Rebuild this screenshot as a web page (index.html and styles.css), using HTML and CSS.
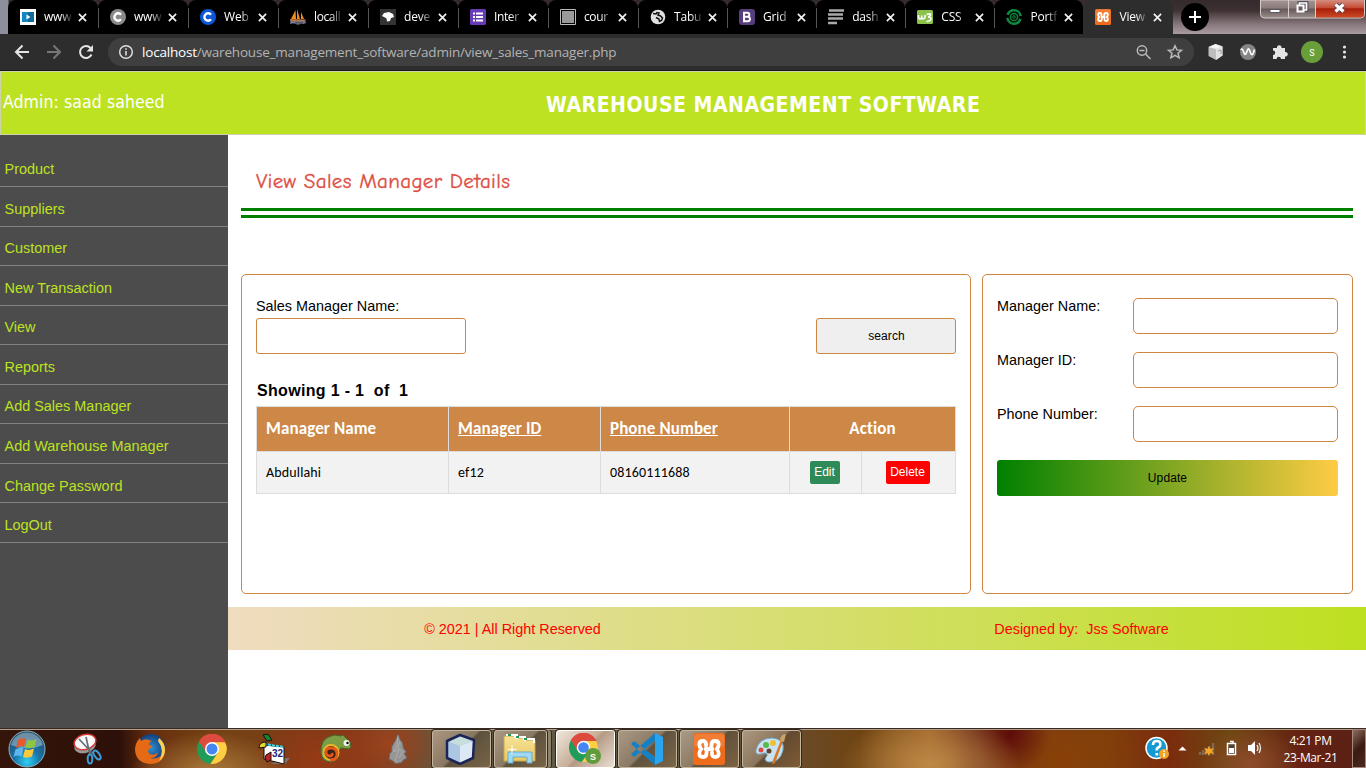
FILE: index.html
```html
<!DOCTYPE html>
<html lang="en">
<head>
<meta charset="utf-8">
<title>View Sales Manager</title>
<link rel="stylesheet" href="styles.css">
</head>
<body>
<svg width="0" height="0" class="defs">
  <defs>
    <radialGradient id="orb" cx=".5" cy=".85" r=".8"><stop offset="0" stop-color="#2fd0f5"/><stop offset=".45" stop-color="#1874a8"/><stop offset="1" stop-color="#274c66"/></radialGradient>
    <linearGradient id="fold" x2="0" y2="1"><stop offset="0" stop-color="#f6e29a"/><stop offset="1" stop-color="#ecc95f"/></linearGradient>
    <linearGradient id="cap" x2="0" y2="1"><stop offset="0" stop-color="#a39593"/><stop offset=".45" stop-color="#8b7b79"/><stop offset=".5" stop-color="#655857"/><stop offset="1" stop-color="#9b8f8e"/></linearGradient>
    <linearGradient id="capx" x2="0" y2="1"><stop offset="0" stop-color="#d58c7e"/><stop offset=".45" stop-color="#c44a33"/><stop offset=".5" stop-color="#a81e0b"/><stop offset="1" stop-color="#cc4a25"/></linearGradient>
    <radialGradient id="ffx"><stop offset="0" stop-color="#2c8fd6"/><stop offset="1" stop-color="#123f7c"/></radialGradient>
    <symbol id="x" viewBox="0 0 10 10"><path d="M1 1l8 8M9 1L1 9" stroke="#f2f2f2" stroke-width="1.9"/></symbol>
    <symbol id="chrome" viewBox="0 0 30 30">
      <path d="M15 15L2 7.5A15 15 0 0 1 28 7.5L15 8z" fill="#dd4b3e"/>
      <path d="M15 15L2 7.5A15 15 0 0 0 13.4 29.9L21 18.5z" fill="#1f9d58"/>
      <path d="M15 8h13A15 15 0 0 1 13.4 29.9L21 18.5z" fill="#ffce43"/>
      <path d="M2 7.5A15 15 0 0 1 28 7.5L28.3 8.2H15L8.8 18z" fill="#dd4b3e"/>
      <circle cx="15" cy="15" r="7" fill="#fff"/><circle cx="15" cy="15" r="5.5" fill="#4486f4"/>
    </symbol>
    <symbol id="xampp" viewBox="0 0 32 32">
      <rect width="32" height="32" rx="3" fill="#ee6c1c"/><rect x="1" y="1" width="30" height="13" rx="3" fill="#f59552" opacity=".45"/>
      <path d="M13 12.500V11a3 3 0 0 0-3-3Q6.300 8 6.300 11.500 6.300 14 8.300 16 6.300 18 6.300 20.500 6.300 24 10 24q3.500 0 3.500-4 0-4 2.500-4t2.500-4q0-4 3.500-4 3.700 0 3.700 3.500 0 2.500-2 4.500 2 2 2 4.500 0 3.500-3.700 3.500a3 3 0 0 1-3-3v-1.500M12.500 16h7" fill="none" stroke="#fff" stroke-width="3.800" stroke-linecap="round" stroke-linejoin="round"/>
    </symbol>
  </defs>
</svg>

<div class="screen">
  <div class="tabstrip">
    <div class="tab"><svg class="fav" viewBox="0 0 16 16"><path fill="#fff" d="M0 0h16v16H0z"/><path fill="#1488c4" d="M2 3h12v10H2z"/><path fill="#116b9c" d="M8 3h6v10H8z"/><path fill="#fff" d="M6.500 5.500l4 2.500-4 2.500z"/></svg><span>www</span><svg class="close"><use href="#x"/></svg></div>
    <div class="tab"><svg class="fav" viewBox="0 0 16 16"><circle cx="8" cy="8" r="8" fill="#8a8a8a"/><path d="M11 5.700a3.700 3.700 0 1 0 0 4.600" fill="none" stroke="#fff" stroke-width="2.400"/></svg><span>www</span><svg class="close"><use href="#x"/></svg></div>
    <div class="tab"><svg class="fav" viewBox="0 0 16 16"><circle cx="8" cy="8" r="8" fill="#0b57d8"/><path d="M11 5.700a3.700 3.700 0 1 0 0 4.600" fill="none" stroke="#fff" stroke-width="2.400"/></svg><span>Web</span><svg class="close"><use href="#x"/></svg></div>
    <div class="tab"><svg class="fav" viewBox="0 0 16 16"><path d="M1 10L5.500 1 6 10zM7 10V0l3 10zM11 10V3l3 7z" fill="#ee8b1b"/><path d="M0 10l16 .5-2 2H1z" fill="#c8732a"/><path d="M1 15v-3l2 2 2-2v3M7 12v3h2v-3h2v3M13 15v-3h2v2h-2" fill="none" stroke="#8b8ba8" stroke-width="1.200"/></svg><span class="tight">locall</span><svg class="close"><use href="#x"/></svg></div>
    <div class="tab"><svg class="fav" viewBox="0 0 16 16"><path fill="#333" d="M0 0h16v16H0z"/><path fill="#fff" d="M2 7l2-3 5-1 4 2 1 3-3 1-1 3-3 .5-.5-3L5 8.500z"/></svg><span>deve</span><svg class="close"><use href="#x"/></svg></div>
    <div class="tab"><svg class="fav" viewBox="0 0 16 16"><rect width="16" height="16" rx="1.500" fill="#673ab7"/><path d="M3 4.500h2M3 8h2M3 11.500h2M6 4.500h7M6 8h7M6 11.500h7" stroke="#fff" stroke-width="2"/></svg><span class="tight">Inter</span><svg class="close"><use href="#x"/></svg></div>
    <div class="tab"><svg class="fav" viewBox="0 0 16 16"><path d="M.5.500h15v15H.5z" fill="#000" stroke="#bbb"/><path fill="#999" d="M2 2h12v12H2z"/></svg><span class="tight">cour</span><svg class="close"><use href="#x"/></svg></div>
    <div class="tab n"><svg class="fav" viewBox="0 0 16 16"><circle cx="8" cy="8" r="7.300" fill="#e2e2e2"/><path d="M3 4.500l3 .5 1-1.500 2 .5-1 2 2.500 1 2 2-1 2.500-2 1-.5-2.500-3-1.500" fill="none" stroke="#111" stroke-width="1.500"/></svg><span>Tabu</span><svg class="close"><use href="#x"/></svg></div>
    <div class="tab n"><svg class="fav" viewBox="0 0 16 16"><rect width="16" height="16" rx="3" fill="#563d7c"/><path d="M5 3.700h3.300a2 2 0 0 1 0 4.100H5zM5 7.800h3.700a2.200 2.200 0 0 1 0 4.500H5z" fill="none" stroke="#fff" stroke-width="1.900"/></svg><span>Grid</span><svg class="close"><use href="#x"/></svg></div>
    <div class="tab n"><svg class="fav" viewBox="0 0 16 16"><path d="M1 1.500h15M0 5.500h15M0 9.500h15" stroke="#aaa" stroke-width="2.700"/><path d="M0 14h9" stroke="#aaa" stroke-width="2.500"/></svg><span>dash</span><svg class="close"><use href="#x"/></svg></div>
    <div class="tab n"><svg class="fav" viewBox="0 0 16 16"><rect y="1" width="16" height="14" rx="1.500" fill="#8bc34a"/><path d="M1.500 6v2q0 2 1.500 2t1.700-2v-1.500V8q0 2 1.500 2T8 8V6M9.500 5.500Q14 4 13.500 6T11 8q3 0 3 2t-4.500 2.500" fill="none" stroke="#fff" stroke-width="1.600"/></svg><span>CSS</span><svg class="close"><use href="#x"/></svg></div>
    <div class="tab n last"><svg class="fav" viewBox="0 0 16 16"><circle cx="8" cy="8" r="6.700" fill="none" stroke="#0b8b41" stroke-width="2.500" stroke-dasharray="18 3" stroke-dashoffset="-2"/><circle cx="8" cy="8" r="3.600" fill="none" stroke="#0b8b41" stroke-width="1.500"/><circle cx="8" cy="8" r="1.300" fill="none" stroke="#0b8b41"/></svg><span>Portf</span><svg class="close"><use href="#x"/></svg></div>
    <div class="tab n active"><svg class="fav"><use href="#xampp"/></svg><span>View</span><svg class="close"><use href="#x"/></svg></div>
    <svg class="newtab" viewBox="0 0 28 28"><circle cx="14" cy="14" r="14"/><path d="M14 8v12M8 14h12" stroke="#fff" stroke-width="2"/></svg>
    <svg class="caption" viewBox="0 0 105 20"><path d="M.5 0v14q0 4 4 4h96q4 0 4-4V0z" fill="url(#cap)" stroke="#d5cccb"/><path d="M56 0h48v14q0 3.500-3.500 3.500H56z" fill="url(#capx)"/><path d="M28.500 0v18M55.500 0v18" stroke="#d5cccb"/><rect x="10" y="9.500" width="10" height="3" fill="#fff" stroke="#5b5966"/><path d="M39.500 3h7v7h-7z" fill="none" stroke="#555260" stroke-width="4"/><path d="M39.500 3h7v7h-7z" fill="none" stroke="#fff" stroke-width="1.700"/><path d="M37.500 5.500h6v6h-6z" fill="#665b61" stroke="#fff" stroke-width="2"/><path d="M75.500 4.500l8 7M83.500 4.500l-8 7" stroke="#5d4a57" stroke-width="5"/><path d="M75.500 4.500l8 7M83.500 4.500l-8 7" stroke="#fff" stroke-width="3"/></svg>
  </div>

  <div class="toolbar">
    <svg class="nav" viewBox="0 0 100 36" fill="none" stroke-width="2"><path d="M29 18H16M22.500 11.500L16 18l6.500 6.500" stroke="#e5e5e5"/><path d="M47 18h13M53.500 11.500L60 18l-6.500 6.500" stroke="#777"/><path d="M91.500 20.500a6 6 0 1 1-1-6.500" stroke="#e5e5e5"/><path d="M93 11v6.500h-6.500z" fill="#e5e5e5"/></svg>
    <div class="address">
      <svg class="info" viewBox="0 0 16 16"><circle cx="8" cy="8" r="6.300" fill="none" stroke="#ddd" stroke-width="1.500"/><path d="M8 7v4.500M8 4.200v1.600" stroke="#ddd" stroke-width="1.600"/></svg>
      <span class="url"><b>localhost</b>/warehouse_management_software/admin/view_sales_manager.php</span>
      <svg class="addr-icons" viewBox="0 0 50 20" fill="none" stroke="#bbb" stroke-width="1.500"><circle cx="8" cy="8.500" r="4.700"/><path d="M11.500 12l5 5M5.500 8.500h5"/><path d="M41 3.700l1.900 4.200 4.600.4-3.500 3 1.100 4.500-4.100-2.400-4.100 2.400 1.100-4.500-3.500-3 4.600-.4z"/></svg>
    </div>
    <svg class="exts" viewBox="0 0 168 36"><path d="M17.500 10l7 2.500v9L18 26l-7.500-4v-9z" fill="#bdbdbd"/><path d="M10.500 13l7-3 7 2.500L18 15z" fill="#f3f3f3"/><path d="M18 15l6.500-2.500v9L18 26z" fill="#e1e1e1"/><path d="M20 17l3-1v4" fill="none" stroke="#999"/><circle cx="50" cy="18" r="8" fill="#858585"/><path d="M43 16q1-2.500 2.500 1.500 1.500 5.500 3 1l1-2.500q1-2.500 2 0l1 3q1.500 3.500 3-.5l1-3" fill="none" stroke="#fff" stroke-width="1.600"/><path d="M75 14h4a2.300 2.300 0 1 1 4.500 0H87v4a2.300 2.300 0 1 1 0 4.500V25h-4a2.200 2.200 0 0 0-4.400 0H75v-4a2.200 2.200 0 0 0 0-4.400z" fill="#e4e4e4"/><circle cx="114" cy="18" r="11" fill="#689f38"/><text x="114" y="21.500" text-anchor="middle" class="avatar">S</text><g fill="#e5e5e5"><circle cx="146.500" cy="13" r="1.600"/><circle cx="146.500" cy="18" r="1.600"/><circle cx="146.500" cy="23" r="1.600"/></g></svg>
  </div>

  <div class="page">
    <header class="banner"><div class="admin">Admin: saad saheed</div><h1>WAREHOUSE MANAGEMENT SOFTWARE</h1></header>
    <div class="body">
      <nav class="side"><a>Product</a><a>Suppliers</a><a>Customer</a><a>New Transaction</a><a>View</a><a>Reports</a><a>Add Sales Manager</a><a>Add Warehouse Manager</a><a>Change Password</a><a>LogOut</a></nav>
      <div class="right">
        <main>
          <h2><span>View Sales Manager Details</span></h2>
          <div class="panels">
            <section class="panel list">
              <label>Sales Manager Name:</label>
              <div class="search"><input type="text"><button>search</button></div>
              <p class="showing">Showing 1 - 1 &nbsp;of &nbsp;1</p>
              <table>
                <colgroup><col class="c1"><col class="c2"><col class="c3"><col class="c4"><col class="c5"></colgroup>
                <tr><th>Manager Name</th><th><u>Manager ID</u></th><th><u>Phone Number</u></th><th colspan="2" class="action">Action</th></tr>
                <tr><td>Abdullahi</td><td>ef12</td><td>08160111688</td><td class="btn-cell"><span class="btn edit">Edit</span></td><td class="btn-cell"><span class="btn delete">Delete</span></td></tr>
              </table>
            </section>
            <section class="panel form">
              <div class="row"><label>Manager Name:</label><input type="text"></div>
              <div class="row"><label>Manager ID:</label><input type="text"></div>
              <div class="row"><label>Phone Number:</label><input type="text"></div>
              <button class="update">Update</button>
            </section>
          </div>
        </main>
        <footer><span>© 2021 | All Right Reserved</span><span>Designed by: &nbsp;Jss Software</span></footer>
      </div>
    </div>
  </div>

  <div class="taskbar">
    <div class="start"><svg width="40" height="38" viewBox="0 0 40 38"><circle cx="20" cy="19" r="18" fill="url(#orb)" stroke="#8cb3c5"/><path d="M4 15a16.500 16.500 0 0 1 32 0q-16 7-32 0" fill="#c5d9e5" opacity=".45"/><path d="M11 10q4-3 8-1l-2 8q-4-2-8 1z" fill="#e8592b"/><path d="M20.500 9.500q4 2 9-.5l-2 8q-5 2-9 .5z" fill="#8fc541"/><path d="M8.500 19.500q4-3 8-1l-2 8q-4-2-8 .5z" fill="#60b5ea"/><path d="M18 19q4 2 9-.5l-2 8q-5 2-9 .5z" fill="#fdc93a"/></svg></div>
    <div class="pin"><svg width="32" height="32" viewBox="0 0 32 32"><ellipse cx="13" cy="13" rx="11" ry="7" transform="rotate(-15 13 13)" fill="#999"/><ellipse cx="13" cy="9" rx="11" ry="7.500" transform="rotate(-15 13 9)" fill="#fafafa" stroke="#d33a35" stroke-width="1.500"/><path d="M7 6l14 15M14 4l4 18" stroke="#656e75" stroke-width="1.700"/><ellipse cx="18" cy="26" rx="2.300" ry="4.500" fill="none" stroke="#3b9fdc" stroke-width="2"/><ellipse cx="25" cy="22" rx="2.500" ry="5" transform="rotate(-35 25 22)" fill="none" stroke="#3b9fdc" stroke-width="2"/></svg></div>
    <div class="pin"><svg width="32" height="32" viewBox="0 0 32 32"><circle cx="17" cy="15" r="14" fill="url(#ffx)"/><path d="M25 5q6 5 6 12Q30 31 16 31 2 30 1 17q0-7 5-12l1 3q4-3 8-1l3 1q-3 1-3 4l4 1-4 3q-2 3 1 5 5 2 8-2-1 6-8 6 10 2 13-6 2-7-3-14" fill="#e66a16"/><path d="M25 5q6 5 6 12 0 7-6 11 6-11-1-20" fill="#fbd24b"/></svg></div>
    <div class="pin"><svg width="30" height="30"><use href="#chrome"/></svg></div>
    <div class="pin"><svg width="32" height="32" viewBox="0 0 32 32"><path d="M24 25h8l-5 6H13z" fill="#80706a"/><path d="M6 12l20 2v17L6 26z" fill="#fff" stroke="#111"/><path d="M6 11l20 3" stroke="#40d7e4" stroke-width="2" stroke-dasharray="3 1"/><path d="M5 2l5-1 4 6-5 1z" fill="#168234" stroke="#111"/><path d="M1 15q0-6 7-6v5z" fill="#e5d92d" stroke="#111"/><path d="M8 22l5-3v8l-4 2-2-4z" fill="#c41f25" stroke="#111"/><text x="19.500" y="24" text-anchor="middle" class="cal">32</text></svg></div>
    <div class="pin"><svg width="32" height="30" viewBox="0 0 32 30"><path d="M19 17q1 10-8 11Q2 28 1 19 0 5 11 2l4-1 6 1 2-1 4 4q4 2 4 8l-2 2-8-1z" fill="#7d9d45" stroke="#48642a"/><circle cx="11" cy="18.500" r="7.500" fill="#3b2214" stroke="#e9b92c" stroke-width="2"/><path d="M10 26q7 0 7-6 0-6-6-6-5 0-5 4 0 4 4 4 3 0 2-3" fill="none" stroke="#e8581b" stroke-width="2.800"/><circle cx="26.500" cy="9" r="3" fill="#f4f5ea"/><circle cx="27.500" cy="9" r="1.200"/></svg></div>
    <div class="pin"><svg width="20" height="32" viewBox="0 0 22 32"><path d="M11 0l3 7 2 2 1 6 3 4-2 2 3 5-4 2-2 3-7 1-3-3-4-2 1-6 2-2 0-5 2-4 2-3z" fill="#969696" stroke="#666"/><path d="M11 1l-1 11-4 7 6-2-4 11 3 3M13 8l-2 7 5 4-4 7" fill="none" stroke="#b5b5b5" stroke-width=".8"/></svg></div>
    <div class="tasks">
      <div class="task"><svg width="32" height="32" viewBox="0 0 32 32"><path d="M15 2l14 5-1 18-13 6-13-6L2 8z" fill="#abc7e4"/><path d="M2 8l13-6 14 5-14 6z" fill="#c6dfdc"/><path d="M15 13l13-5v17l-13 5z" fill="#dce8f5"/><path d="M15 2l14 5-1 18-13 6-13-6L2 8z" fill="none" stroke="#1c2456" stroke-width="2.500" stroke-linejoin="round"/></svg></div>
      <div class="task folder"><svg width="34" height="32" viewBox="0 0 34 32"><path d="M1 3h11l1 2h9l1 2h9v21H1z" fill="url(#fold)" stroke="#c6a64b"/><path d="M3 2h11v4M11 4h11v4M20 6h11v4" fill="none" stroke="#fff" stroke-width="2"/><path d="M5 2h3M13 4h3M21 6h3" stroke-width="2" stroke="#209952"/><path d="M5 30V19h24v11h-5v-6H10v6z" fill="#9fdaf2" stroke="#67acd0"/><path d="M9 12v9M4.500 16.500h9" stroke="#fff" stroke-width=".8"/><circle cx="9" cy="16.500" r="1.500" fill="#fff"/></svg></div>
      <div class="task current"><svg width="32" height="32" viewBox="0 0 32 32"><use href="#chrome" width="29" height="29"/><circle cx="24" cy="23" r="8" fill="#629b3a"/><text x="24" y="26.500" text-anchor="middle" class="badge">S</text></svg></div>
      <div class="task"><svg width="32" height="32" viewBox="0 0 32 32"><path d="M0 11l3-3 21 16v8zM0 21l3 3L24 8V0z" fill="#1580c4"/><path d="M24 0l8 4v24l-8 4z" fill="#29a4ee"/></svg></div>
      <div class="task"><svg width="32" height="32"><use href="#xampp"/></svg></div>
      <div class="task"><svg width="32" height="32" viewBox="0 0 32 32"><path d="M1 17Q4 5 17 5q13 1 11 12-3 13-15 12-5-2-1-6 1-5-6-2-6 1-5-4" fill="#c8e2f2" stroke="#6fa9c7"/><circle cx="6" cy="17" r="2.500" fill="#db4940"/><circle cx="11" cy="12" r="3" fill="#5bb947"/><circle cx="18" cy="10" r="3" fill="#edc230"/><circle cx="14" cy="18" r="2.500" fill="#62422b"/><path d="M26 7l2 1-8 22-3 1 1-4z" fill="#d97826"/><path d="M25 8q0-7 6-7l-2 8z" fill="#cda26a"/></svg></div>
    </div>
    <div class="tray">
      <svg width="200" height="36" viewBox="1146 0 200 36"><circle cx="1158.500" cy="18" r="10.500" fill="#1499d2" stroke="#fff" stroke-width="1.500"/><path d="M1155 15q0-4 3.800-4t3.600 3.500q0 2-2 3t-1.600 3M1158.800 23v2.500" fill="none" stroke="#fff" stroke-width="2.600"/><circle cx="1166" cy="24" r="5" fill="#f1a323"/><path d="M1166 23v4M1166 20.500v1.500" stroke="#fff" stroke-width="1.500"/><path d="M1180.500 20.500l4-4 4 4z" fill="#fff"/><path d="M1202 25v-3M1205 25v-5M1208 25v-7M1211 25v-9M1215 25V13" stroke="#806750" stroke-width="2.500"/><path d="M1211 16l1.500 3 3.500-1-2 3 2 3-3.500-1-1.500 3-1.500-3-3.500 1 2-3-2-3 3.500 1z" fill="#f5a623"/><path d="M1229.500 13.500h8v11h-8zM1232 11.500h3v2" fill="#554332" stroke="#fff" stroke-width="1.500"/><path d="M1231 18h5v5h-5z" fill="#fff"/><path d="M1250 15h3l4-4v14l-4-4h-3z" fill="#fff"/><path d="M1259 15q2 3 0 6M1261 13q3 5 0 10" fill="none" stroke="#eee" stroke-width="1.300"/></svg>
      <div class="clock"><div>4:21 PM</div><div>23-Mar-21</div></div>
      <div class="peek"></div>
    </div>
  </div>
</div>
</body>
</html>
```
FILE: styles.css
```css
* { box-sizing: border-box; }
body { margin: 0; width: 1366px; height: 768px; overflow: hidden; background: #fff; font-family: "Liberation Sans", Arial, sans-serif; }
svg { display: block; flex: none; }
.defs { position: absolute; }
.screen { display: flex; flex-direction: column; height: 768px; }

.tabstrip { height: 34px; display: flex; flex: none; padding-left: 8px; position: relative; background: linear-gradient(90deg, #8d8f9c 0, #8d8f9c 8px, transparent 9px), linear-gradient(180deg, #352b2c 0, #3c3031 30%, #85757a 70%, #a89da0 100%); }
.tab { width: 90px; height: 34px; flex: none; display: flex; align-items: center; padding-left: 12px; background: #000; border-radius: 8px 8px 0 0; position: relative; }
.tab.n { width: 89.100px; }
.tab::after { content: ""; position: absolute; right: -1px; top: 8px; width: 1px; height: 20px; background: #555; z-index: 1; }
.tab.active::after, .tab.last::after { display: none; }
.tab.active { background: #2d2d2d; }
.fav { width: 16px; height: 16px; margin-right: 8px; }
.tab span { width: 27px; white-space: nowrap; color: #fff; font: 12px/18px "Open Sans", "Noto Sans", sans-serif; letter-spacing: -.2px; -webkit-mask-image: linear-gradient(90deg, #000 60%, #0003); mask-image: linear-gradient(90deg, #000 60%, #0003); }
.tab span.tight { letter-spacing: -.4px; }
.close { width: 9px; height: 9px; margin-left: 7px; }
.newtab { width: 28px; height: 28px; margin: 3px 0 0 8px; }
.caption { position: absolute; right: 1px; top: 0; width: 105px; height: 20px; }

.toolbar { height: 37px; flex: none; display: flex; background: #2d2d2d; border-bottom: 1px solid #181818; }
.nav { width: 100px; height: 36px; margin-right: 8px; }
.address { width: 1086px; height: 28px; margin-top: 4px; border-radius: 14px; background: #3f3f3f; display: flex; align-items: center; padding-left: 10px; }
.info { width: 16px; height: 16px; margin-right: 8px; }
.url { flex: 1; color: #b3b3b3; font: 13.500px/20px "Open Sans", "Noto Sans", sans-serif; letter-spacing: -.195px; white-space: nowrap; }
.url b { font-weight: 400; color: #fff; }
.addr-icons { width: 50px; height: 20px; margin-right: 10px; }
.exts { width: 168px; height: 36px; margin-left: 4px; }
.avatar { font: 9px Roboto, sans-serif; fill: #fff; }

.page { flex: 1; min-height: 0; display: flex; flex-direction: column; }
.banner { height: 64px; flex: none; display: flex; border: 1px solid #cfd3a8; background: #bde222; color: #fff; font-family: Tahoma, "DejaVu Sans Condensed", "DejaVu Sans", sans-serif; }
.admin { width: 545px; padding: 19px 0 0 2px; font-size: 17.500px; line-height: 22px; letter-spacing: .08px; }
.banner h1 { margin: 0; padding-top: 20px; font-size: 21px; line-height: 26px; letter-spacing: .53px; white-space: nowrap; }
.body { flex: 1; min-height: 0; display: flex; }
.side { width: 228px; flex: none; padding-top: 12.500px; background: #4c4c4c; }
.side a { display: block; height: 39.550px; padding: 12.700px 0 0 4.500px; border-bottom: 1px solid #828282; color: #bde222; font-size: 14.450px; line-height: 18px; }
.right { flex: 1; min-width: 0; }
main { height: 472px; padding: 0 13px; }
h2 { margin: 0; height: 83px; padding: 33px 0 0 15px; border-bottom: 10px double #008000; color: #dc4f44; font: 400 21px/27px "Comic Sans MS", "Comic Neue", "Noto Sans", sans-serif; letter-spacing: .34px; -webkit-text-stroke: .35px #dc4f44; }
.panels { display: grid; grid-template-columns: 730px 371px; column-gap: 11px; height: 320px; margin-top: 56px; }
.panel { border: 1px solid #cd853f; border-radius: 5px; padding: 0 14px; font-size: 14.400px; }
.list { padding-top: 22px; }
.panel label { display: block; line-height: 18px; }
input { display: block; margin: 0; height: 36px; border: 1px solid #cd853f; border-radius: 3px; background: #fff; }
.search { display: flex; justify-content: space-between; margin-top: 3px; }
.search input { width: 210px; }
button { display: block; height: 36px; padding: 0; border: 1px solid #cd853f; border-radius: 3px; background: #efefef; color: #000; font: 12px "Liberation Sans", Arial, sans-serif; }
.search button { width: 140px; letter-spacing: .1px; padding-left: 1px; }
.showing { margin: 27px 0 0 1px; height: 25px; font-size: 16px; line-height: 20px; font-weight: 700; letter-spacing: .32px; white-space: nowrap; }
table { width: 699px; table-layout: fixed; border-collapse: collapse; background: #f2f2f2; font: 14px/17px Calibri, Lato, sans-serif; }
.c1 { width: 192px; } .c2 { width: 152px; } .c3 { width: 189px; } .c4 { width: 72px; } .c5 { width: 94px; }
th, td { border: 1px solid #ddd; padding: 0 9px; text-align: left; }
th { height: 45px; padding-bottom: 2px; background: #cd8746; color: #fff; font-size: 17px; letter-spacing: .1px; }
td { height: 42px; letter-spacing: .15px; }
th.action, .btn-cell { text-align: center; }
.btn-cell { padding: 0; }
.btn { display: inline-block; height: 23px; border-radius: 2px; color: #fff; font: 12px/22px "Liberation Sans", Arial, sans-serif; letter-spacing: 0; vertical-align: middle; position: relative; left: -1px; }
.edit { width: 30px; background: #2e8b57; }
.delete { width: 44px; background: #f00; }
.form { padding-top: 23px; }
.row { display: flex; justify-content: space-between; height: 54px; }
.row label { margin-top: -1px; }
.row input { width: 205px; border-radius: 5px; }
.update { width: 341px; border: 0; background: linear-gradient(90deg, #008000, #ffcc44); letter-spacing: .1px; }
footer { height: 43px; display: grid; grid-template-columns: 1fr 1fr; align-items: center; text-align: center; background: linear-gradient(90deg, #f0dcc0, #bde020); color: #f00; font-size: 14.400px; }

.taskbar { height: 40px; flex: none; display: flex; border-top: 1px solid #382a22; box-shadow: inset 0 1px #b3a08b; background:
  radial-gradient(ellipse 80px 42px at 210px 45px, #ad7b3c, transparent),
  radial-gradient(ellipse 70px 55px at 320px 30px, #963a15, transparent),
  radial-gradient(ellipse 60px 50px at 390px 15px, #9c431c, transparent),
  radial-gradient(ellipse 90px 50px at 930px 35px, #bb8845, transparent),
  radial-gradient(ellipse 40px 40px at 1010px 5px, #5d0c08, transparent),
  radial-gradient(ellipse 80px 60px at 1060px 30px, #884006, transparent),
  radial-gradient(ellipse 50px 40px at 1250px 35px, #8f4b2b, transparent),
  linear-gradient(90deg, #351509 0, #2d1009 120px, #692e0e 150px, #754313 220px, #7b351a 360px, #5f5640 430px, #675b45 700px, #6a4b2c 790px, #6e4311 860px, #a1662b 930px, #773720 970px, #80400c 1100px, #7b2c0d 1170px, #6c4811 1230px, #652112 1300px, #592016 1366px); }
.start { width: 57px; padding-left: 7px; display: flex; align-items: center; }
.pin { width: 62px; display: flex; align-items: center; justify-content: center; }
.tasks { display: flex; gap: 3px; padding: 1px 0 0 3px; }
.task { width: 59px; height: 38px; display: flex; align-items: center; justify-content: center; border: 1px solid #c3b6a1; border-radius: 3px; box-shadow: 0 0 0 1px #30291e; background: linear-gradient(135deg, #cdb9a5aa 0, #aa957f88 48%, #56483666 52%, #a87e5055 100%); }
.task.folder { width: 53px; margin-right: 6px; box-shadow: 0 0 0 1px #30291e, 4px 0 0 #8b826e, 5px 0 0 #30291e; }
.task.current { background: linear-gradient(135deg, #f0e7dc, #c7ae98 48%, #b59a84 52%, #eadfd3); border-color: #fff; }
.task svg { position: relative; left: -1px; }
.badge { font: bold 9px "Liberation Sans", sans-serif; fill: #fff; }
.cal { font: bold 10px "Liberation Sans", sans-serif; fill: #20247c; }
.tray { margin-left: auto; display: flex; }
.tray > svg { margin: 1px -73px 0 0; }
.clock { width: 79px; padding-top: 3px; color: #fff; font: 12px/17px "Open Sans", "Noto Sans", sans-serif; letter-spacing: -.4px; text-align: center; white-space: nowrap; margin-right: 2px; }
.clock div { height: 17px; }
.peek { width: 14px; border: 1px solid #a58b7c; background: linear-gradient(135deg, #8e6c60, #3b1a13 50%, #4d2920); }
```
